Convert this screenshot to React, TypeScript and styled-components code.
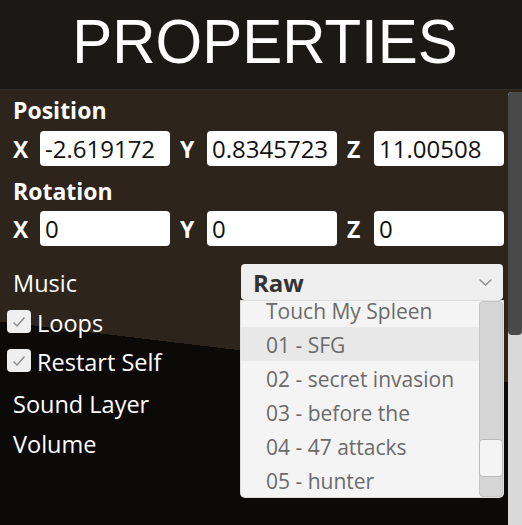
import React from "react";
import styled, { createGlobalStyle } from "styled-components";

const Global = createGlobalStyle`
  html, body { margin: 0; padding: 0; background: #0c0a09; }
  body { font-family: "Open Sans", "Noto Sans", sans-serif; }
  #root { height: 100vh; }
`;

const Page = styled.div`
  height: 100vh;
  display: flex;
  flex-direction: column;
  overflow: hidden;
`;

const Header = styled.header`
  flex: none;
  height: 90px;
  background: #1b1915;
  border-bottom: 1px solid #352c22;
  display: flex;
  align-items: center;
  justify-content: center;
  padding: 0 0 6px 8px;
  box-sizing: border-box;
`;

const Title = styled.h1`
  margin: 0;
  font-family: "Liberation Sans", Arial, sans-serif;
  font-weight: 400;
  font-size: 60px;
  line-height: 1;
  color: #ffffff;
  transform: scaleY(1.06);
`;

const Body = styled.div`
  flex: 1;
  min-height: 0;
  display: flex;
  background: linear-gradient(186.84deg, #2d251c 292px, #0c0a09 292px);
`;

const Content = styled.div`
  flex: 1;
  padding: 5px 4px 0 13px;
  display: flex;
  flex-direction: column;
`;

const PageScrollbar = styled.div`
  flex: none;
  width: 14px;
  margin-top: 2px;
  background: #d9d9d9;
  border-radius: 4px 0 0 0;
`;

const PageThumb = styled.div`
  height: 243px;
  background: #494949;
  border-radius: 4px 0 4px 4px;
`;

const SectionTitle = styled.div<{ $gap?: number }>`
  font-weight: 700;
  font-size: 23px;
  line-height: 30px;
  color: #ffffff;
  margin-top: ${(p) => p.$gap ?? 0}px;
`;

const AxisRow = styled.div<{ $gap: number }>`
  display: flex;
  gap: 10px;
  margin-top: ${(p) => p.$gap}px;
`;

const Axis = styled.label`
  display: flex;
  align-items: center;
`;

const AxisLabel = styled.span`
  width: 27px;
  font-weight: 700;
  font-size: 23px;
  color: #ffffff;
`;

const NumberInput = styled.input`
  width: 130px;
  height: 35px;
  box-sizing: border-box;
  border: none;
  border-radius: 4px;
  background: #ffffff;
  padding: 0 0 0 5px;
  font-family: "Open Sans", sans-serif;
  font-size: 24px;
  color: #111111;
  outline: none;
`;

const FieldRow = styled.div<{ $gap?: number }>`
  display: flex;
  align-items: center;
  justify-content: space-between;
  height: 40px;
  margin-top: ${(p) => p.$gap ?? 0}px;
`;

const FieldLabel = styled.span`
  font-size: 23.5px;
  color: #ffffff;
  padding-top: 2px;
`;

const CheckRow = styled.label`
  display: flex;
  align-items: center;
  height: 39px;
  margin-left: -6px;
  gap: 6px;
`;

const CheckBox = styled.span`
  width: 24px;
  height: 23px;
  border-radius: 4px;
  background: #efefef;
  display: flex;
  align-items: center;
  justify-content: center;
`;

const SelectWrap = styled.div`
  position: relative;
  width: 262px;
  margin-right: 1px;
`;

const SelectBox = styled.div`
  height: 36px;
  box-sizing: border-box;
  border-radius: 4px;
  background: #efefef;
  display: flex;
  align-items: center;
  justify-content: space-between;
  padding: 0 11px 0 12px;
  font-weight: 700;
  font-size: 24px;
  color: #333333;
`;

const Dropdown = styled.div`
  position: absolute;
  top: 37px;
  left: 0;
  right: 0;
  height: 196px;
  overflow: hidden;
  background: #f4f4f4;
  border-radius: 0 0 4px 4px;
  box-shadow: 0 0 0 1px #dedede;
  z-index: 2;
`;

const OptionList = styled.ul`
  list-style: none;
  margin: -8px 23px 0 0;
  padding: 0;
`;

const Option = styled.li<{ $active?: boolean }>`
  height: 34px;
  box-sizing: border-box;
  display: flex;
  align-items: center;
  padding: 2px 0 0 25px;
  font-size: 21px;
  color: #6b6b6b;
  white-space: nowrap;
  background: ${(p) => (p.$active ? "#e8e8e8" : "transparent")};
`;

const ListScrollbar = styled.div`
  position: absolute;
  top: 0;
  right: 0;
  bottom: 0;
  width: 22px;
  background: #d5d5d5;
  border: 1px solid #c4c4c4;
  border-radius: 4px;
`;

const ListThumb = styled.div`
  position: absolute;
  left: -1px;
  right: -1px;
  top: 137px;
  height: 38px;
  background: #f4f4f4;
  border: 1px solid #b9b9b9;
  border-radius: 4px;
  box-sizing: border-box;
`;

const Check = () => (
  <svg width="14" height="12" viewBox="0 0 14 12" fill="none">
    <path d="M1.5 6.5 L5 10 L12.5 1.5" stroke="#8a8a8a" strokeWidth="1.4" />
  </svg>
);

const Chevron = () => (
  <svg width="13" height="7" viewBox="0 0 13 7" fill="none">
    <path d="M0.5 0.5 L6.5 6 L12.5 0.5" stroke="#8c8c8c" strokeWidth="1.3" />
  </svg>
);

const tracks = [
  "Touch My Spleen",
  "01 - SFG",
  "02 - secret invasion",
  "03 - before the",
  "04 - 47 attacks",
  "05 - hunter",
];

const AxisInputs = ({ values, gap }: { values: string[]; gap: number }) => (
  <AxisRow $gap={gap}>
    {["X", "Y", "Z"].map((a, i) => (
      <Axis key={a}>
        <AxisLabel>{a}</AxisLabel>
        <NumberInput defaultValue={values[i]} />
      </Axis>
    ))}
  </AxisRow>
);

export default function App() {
  return (
    <Page>
      <Global />
      <Header>
        <Title>PROPERTIES</Title>
      </Header>
      <Body>
        <Content>
          <SectionTitle>Position</SectionTitle>
          <AxisInputs gap={6} values={["-2.619172", "0.8345723", "11.00508"]} />
          <SectionTitle $gap={10}>Rotation</SectionTitle>
          <AxisInputs gap={5} values={["0", "0", "0"]} />
          <FieldRow $gap={16}>
            <FieldLabel>Music</FieldLabel>
            <SelectWrap>
              <SelectBox>
                <span>Raw</span>
                <Chevron />
              </SelectBox>
              <Dropdown>
                <OptionList>
                  {tracks.map((t, i) => (
                    <Option key={t} $active={i === 1}>
                      {t}
                    </Option>
                  ))}
                </OptionList>
                <ListScrollbar>
                  <ListThumb />
                </ListScrollbar>
              </Dropdown>
            </SelectWrap>
          </FieldRow>
          <CheckRow>
            <CheckBox>
              <Check />
            </CheckBox>
            <FieldLabel>Loops</FieldLabel>
          </CheckRow>
          <CheckRow>
            <CheckBox>
              <Check />
            </CheckBox>
            <FieldLabel>Restart Self</FieldLabel>
          </CheckRow>
          <FieldRow $gap={3}>
            <FieldLabel>Sound Layer</FieldLabel>
          </FieldRow>
          <FieldRow>
            <FieldLabel>Volume</FieldLabel>
          </FieldRow>
        </Content>
        <PageScrollbar>
          <PageThumb />
        </PageScrollbar>
      </Body>
    </Page>
  );
}
